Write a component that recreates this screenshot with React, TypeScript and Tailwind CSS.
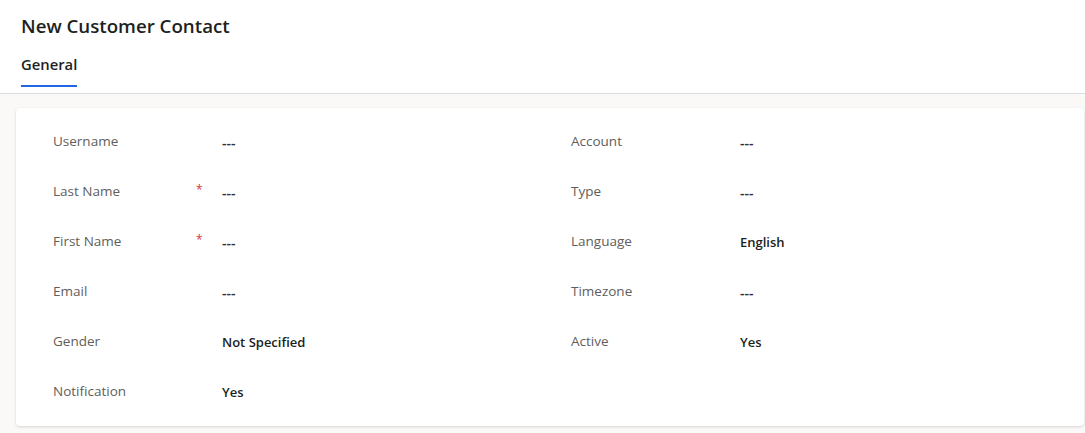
import React from 'react';

type Field = { label: string; value: string; required?: boolean; strong?: boolean };

const LEFT: Field[] = [
  { label: 'Username', value: '---' },
  { label: 'Last Name', value: '---', required: true },
  { label: 'First Name', value: '---', required: true },
  { label: 'Email', value: '---' },
  { label: 'Gender', value: 'Not Specified', strong: true },
  { label: 'Notification', value: 'Yes', strong: true },
];

const RIGHT: Field[] = [
  { label: 'Account', value: '---' },
  { label: 'Type', value: '---' },
  { label: 'Language', value: 'English', strong: true },
  { label: 'Timezone', value: '---' },
  { label: 'Active', value: 'Yes', strong: true },
];

function FieldRow({ f }: { f: Field }) {
  return (
    <div className="flex h-[50px] items-center">
      <span className="w-[143px] text-[13.5px] text-[#605e5c] -mt-[1px]">{f.label}</span>
      <span className="w-[26px] text-[12px] text-[#d13438] -mt-[4px]">{f.required ? '*' : ''}</span>
      <span
        className={
          f.strong
            ? 'text-[13px] font-semibold text-[#201f1e] mt-[1px]'
            : 'text-[14px] font-semibold text-[#323130]'
        }
      >
        {f.value}
      </span>
    </div>
  );
}

export default function App() {
  return (
    <div
      className="min-h-[433px] bg-[#faf9f8]"
      style={{ fontFamily: '"Open Sans", "Noto Sans", sans-serif' }}
    >
      <div className="h-[94px] border-b border-[#dcdcdc] bg-white px-[21px]">
        <h1 className="pt-[12px] text-[18.7px] font-semibold leading-[28px] text-[#201f1e]">
          New Customer Contact
        </h1>
        <div className="mt-[12px] inline-flex flex-col">
          <span className="text-[14.8px] font-semibold leading-[24px] text-[#201f1e]">General</span>
          <span className="mt-[9px] h-[2px] bg-[#2266e3]" />
        </div>
      </div>
      <div className="pl-4 pr-px pt-[14px]">
        <div className="grid grid-cols-[518px_1fr] rounded bg-white px-[37px] pt-[9px] pb-[9px] shadow-[0_1px_3px_rgba(0,0,0,0.14)]">
          <div>
            {LEFT.map((f) => (
              <FieldRow key={f.label} f={f} />
            ))}
          </div>
          <div>
            {RIGHT.map((f) => (
              <FieldRow key={f.label} f={f} />
            ))}
          </div>
        </div>
      </div>
    </div>
  );
}
